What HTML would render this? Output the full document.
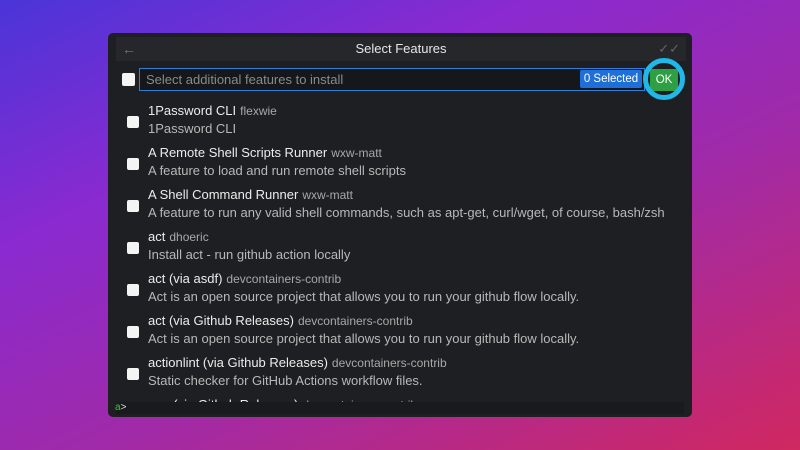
<!DOCTYPE html>
<html><head><style>
*{margin:0;padding:0;box-sizing:border-box}
body{width:800px;height:450px;overflow:hidden;font-family:"Liberation Sans",sans-serif;
background:linear-gradient(155deg,#4a35d8 0%,#8a2ad0 30%,#a02aa8 60%,#d02860 100%);position:relative}
.win{position:absolute;left:108px;top:33px;width:584px;height:384px;background:#1e1f22;border-radius:5px;overflow:hidden}
.title{position:absolute;left:8px;top:4px;width:570px;height:24px;background:#26272b;color:#e6e6e6;font-size:13px;text-align:center;line-height:24px}
.back{position:absolute;left:6px;top:0;color:#777;font-size:14px}
.chk{position:absolute;width:12px;height:12px;background:#f4f4f4;border-radius:2px}
.input{position:absolute;left:31px;top:35px;width:506px;height:23px;border:1px solid #2f7fd8;background:#16171a;color:#8a8a8a;font-size:13px;line-height:21px;padding-left:6px}
.badge{position:absolute;left:472px;top:37px;width:62px;height:18px;background:#1f6fd8;color:#fff;font-size:11.5px;text-align:center;line-height:18px;border-radius:2px}
.ok{position:absolute;left:542px;top:36px;width:28px;height:22px;background:#2ea043;color:#fff;font-size:11.5px;text-align:center;line-height:22px;border-radius:2px}
.ring{position:absolute;left:535px;top:25px;width:42px;height:42px;border:5px solid #1fb8e8;border-radius:50%}
.list{position:absolute;left:0;top:0;width:584px;height:369px;overflow:hidden}
.item{position:absolute;left:0;width:584px;height:42px}
.item .chk{left:19px;top:15px}
.t{position:absolute;left:40px;top:2px;color:#ececec;font-size:13px}
.t span{color:#a8a8a8;font-size:12px;margin-left:4px}
.d{position:absolute;left:40px;top:20px;color:#b8b8b8;font-size:13px}
.bot{position:absolute;left:8px;top:369px;width:568px;height:12px;background:#191a1d}
.prompt{position:absolute;left:7px;top:369px;color:#ddd;font-size:10px}
.prompt b{color:#3c3;font-weight:normal}
</style></head><body>
<div class="win">
<div class="title"><span class="back">←</span>Select Features<span style="position:absolute;right:6px;color:#666">✓✓</span></div>
<div class="chk" style="left:14px;top:40px;width:13px;height:13px"></div>
<div class="input">Select additional features to install</div>
<div class="badge">0 Selected</div>
<div class="ok">OK</div>
<div class="ring"></div>
<div class="list">
<div class="item" style="top:68px"><div class="chk"></div><div class="t">1Password CLI<span>flexwie</span></div><div class="d">1Password CLI</div></div>
<div class="item" style="top:110px"><div class="chk"></div><div class="t">A Remote Shell Scripts Runner<span>wxw-matt</span></div><div class="d">A feature to load and run remote shell scripts</div></div>
<div class="item" style="top:152px"><div class="chk"></div><div class="t">A Shell Command Runner<span>wxw-matt</span></div><div class="d">A feature to run any valid shell commands, such as apt-get, curl/wget, of course, bash/zsh</div></div>
<div class="item" style="top:194px"><div class="chk"></div><div class="t">act<span>dhoeric</span></div><div class="d">Install act - run github action locally</div></div>
<div class="item" style="top:236px"><div class="chk"></div><div class="t">act (via asdf)<span>devcontainers-contrib</span></div><div class="d">Act is an open source project that allows you to run your github flow locally.</div></div>
<div class="item" style="top:278px"><div class="chk"></div><div class="t">act (via Github Releases)<span>devcontainers-contrib</span></div><div class="d">Act is an open source project that allows you to run your github flow locally.</div></div>
<div class="item" style="top:320px"><div class="chk"></div><div class="t">actionlint (via Github Releases)<span>devcontainers-contrib</span></div><div class="d">Static checker for GitHub Actions workflow files.</div></div>
<div class="item" style="top:362px"><div class="t">age (via Github Releases)<span>devcontainers-contrib</span></div></div>
</div>
<div class="bot"></div>
<div class="prompt"><b>a</b>&gt;</div>
</div>
</body></html>
